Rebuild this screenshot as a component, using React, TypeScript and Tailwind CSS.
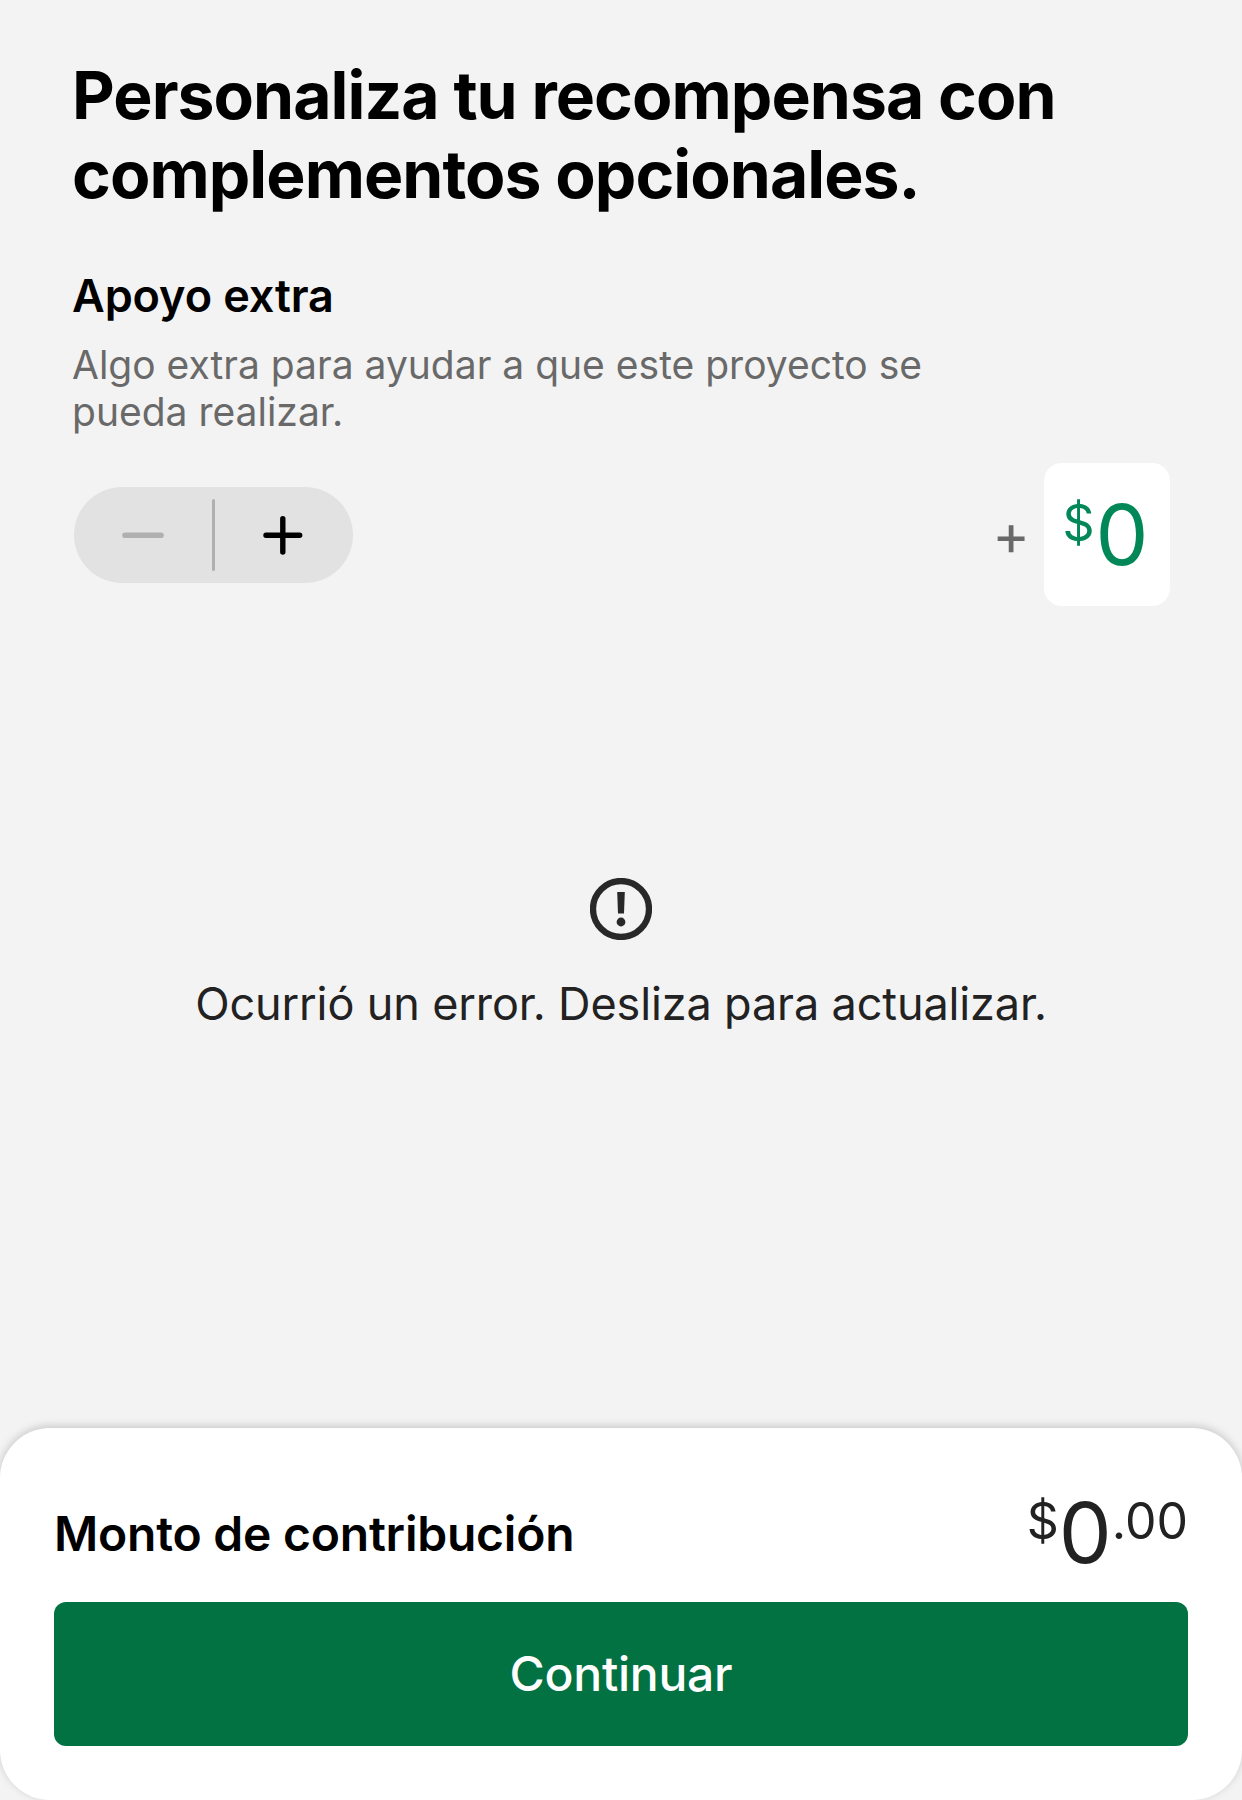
export default function App() {
  return (
    <div className="flex h-[1800px] w-[1242px] flex-col bg-[#f3f3f3] font-['Inter',sans-serif]">
      <main className="flex flex-1 flex-col px-[72px] pt-[56px]">
        <h1 className="whitespace-nowrap text-[66px] font-bold leading-[79px] tracking-[-0.95px] text-black">
          Personaliza tu recompensa con<br />complementos opcionales.
        </h1>
        <h2 className="mt-[54px] text-[45px] font-semibold leading-[56px] tracking-[-0.1px] text-black">Apoyo extra</h2>
        <p className="mt-[17px] text-[39px] leading-[47px] text-[#696969]">
          Algo extra para ayudar a que este proyecto se<br />pueda realizar.
        </p>
        <div className="mt-[28px] flex items-center justify-between">
          <div className="ml-[2px] flex h-[96px] w-[279px] items-center rounded-[48px] bg-[#e2e2e2]">
            <button aria-label="Menos" className="flex w-[138px] justify-center">
              <svg width="44" height="44" viewBox="0 0 44 44" stroke="#b0b0b0" strokeWidth="5.6" strokeLinecap="round"><path d="M4 22.2H40" /></svg>
            </button>
            <div className="h-[72px] w-[3px] rounded-full bg-[#b0b0b0]" />
            <button aria-label="Más" className="flex w-[136px] justify-center">
              <svg width="44" height="44" viewBox="0 0 44 44" stroke="#000" strokeWidth="5.4" strokeLinecap="round"><path d="M5 22.2H38.7M21.8 5.6V39" /></svg>
            </button>
          </div>
          <div className="flex items-center">
            <span className="mr-[14px] text-[57px] leading-[68px] text-[#696969]">+</span>
            <div className="flex h-[143px] w-[126px] items-start justify-center rounded-[18px] bg-white pr-[3px] text-[#028858]">
              <span className="mt-[28px] text-[50px] leading-[64px]">$</span>
              <span className="ml-px mt-[24px] text-[84px] leading-[96px]">0</span>
            </div>
          </div>
        </div>
        <div className="mt-[272px] flex flex-col items-center">
          <svg width="62" height="62" viewBox="0 0 62 62" fill="none" stroke="#282828">
            <circle cx="31" cy="31" r="28" strokeWidth="6.3" />
            <path d="M27.2 14H34.8L34 35.6H28Z" fill="#282828" stroke="none" />
            <circle cx="31" cy="44" r="4.4" fill="#282828" stroke="none" />
          </svg>
          <p className="mt-[36px] whitespace-nowrap text-[45px] leading-[56px] tracking-[-0.13px] text-[#222]">Ocurrió un error. Desliza para actualizar.</p>
        </div>
      </main>
      <footer className="h-[372px] rounded-[50px] bg-white px-[54px] pt-[63px] shadow-[0_-2px_9px_rgba(0,0,0,0.18)]">
        <div className="flex h-[111px] items-start justify-between">
          <h2 className="mt-[13px] text-[48px] font-semibold leading-[60px] tracking-[-0.23px] text-black">Monto de contribución</h2>
          <div className="flex items-start text-[#222]">
            <span className="text-[50px] leading-[60px]">$</span>
            <span className="text-[84px] leading-[84px]">0</span>
            <span className="text-[50px] leading-[60px]">.00</span>
          </div>
        </div>
        <button className="h-[144px] w-full rounded-[12px] bg-[#037242] text-[48px] font-medium tracking-[-0.25px] text-white">Continuar</button>
      </footer>
    </div>
  );
}
